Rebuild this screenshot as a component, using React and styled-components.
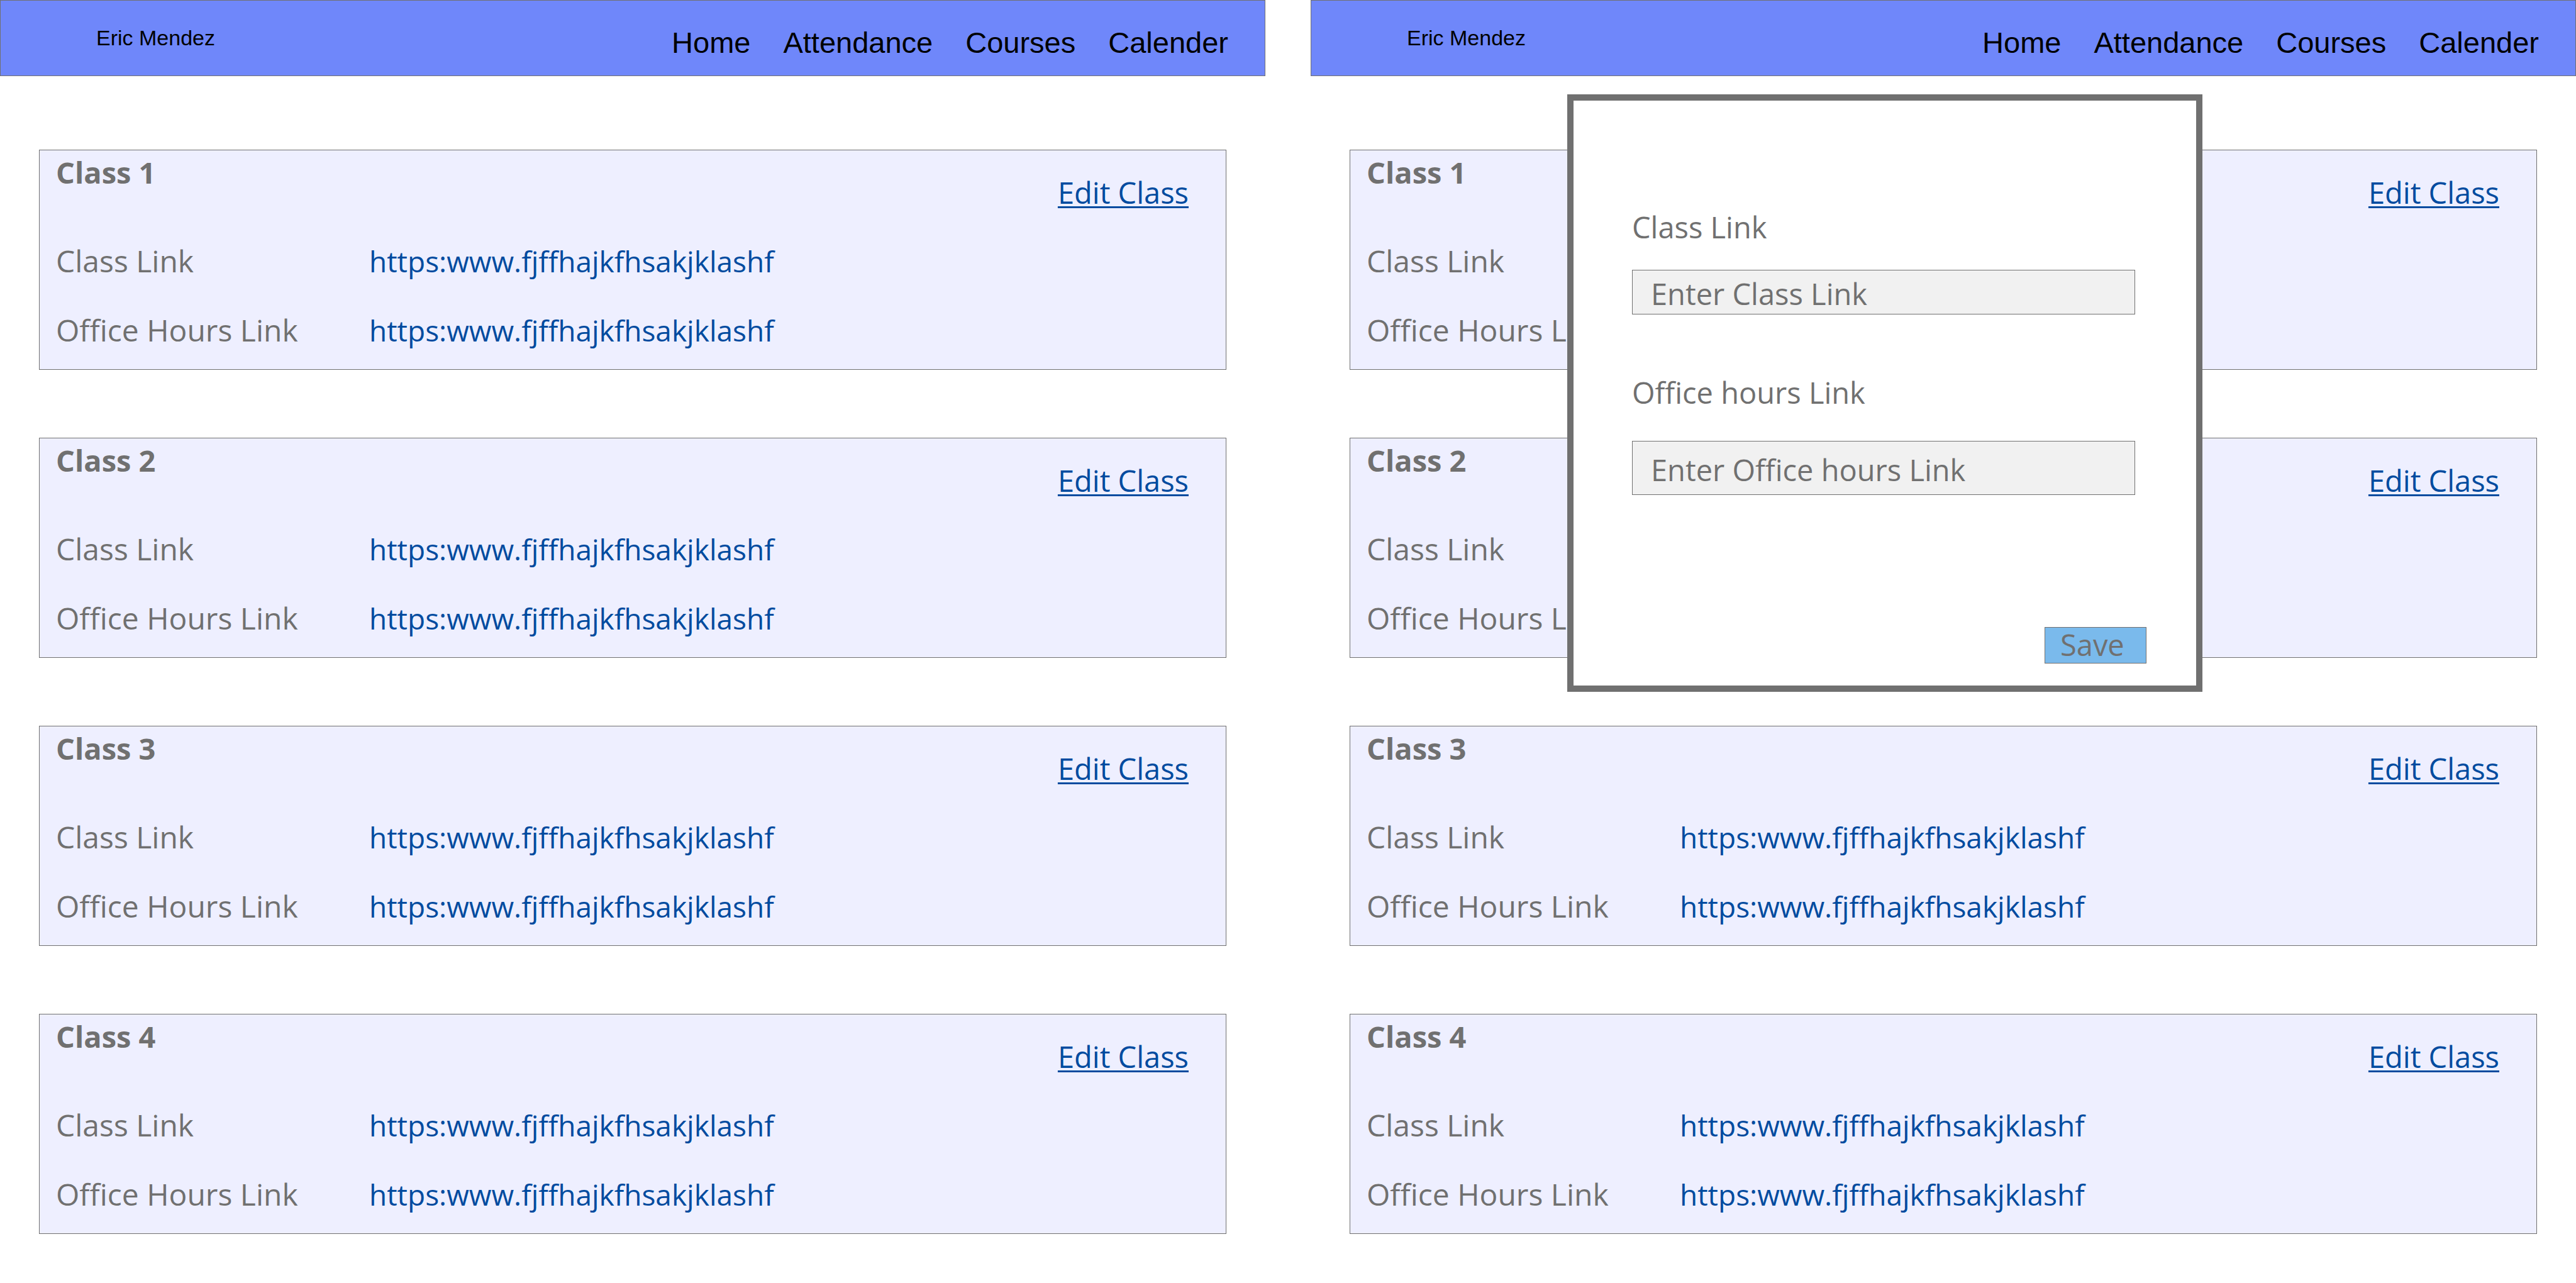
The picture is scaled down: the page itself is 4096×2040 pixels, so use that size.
import React, { useId } from "react";
import styled, { createGlobalStyle } from "styled-components";

const GlobalStyle = createGlobalStyle`
  *, *::before, *::after {
    box-sizing: border-box;
  }
  body {
    margin: 0;
    background: #ffffff;
    color: #707070;
    font-family: "Open Sans", "Noto Sans", sans-serif;
    font-size: 47px;
    font-variant-ligatures: none;
    line-height: 64px;
  }
`;

const Screens = styled.div`
  display: grid;
  grid-template-columns: 1fr 1fr;
  gap: 72px;
`;

const Screen = styled.section`
  position: relative;
  min-width: 0;
`;

const TopBar = styled.header`
  display: flex;
  justify-content: space-between;
  align-items: flex-start;
  padding: 39px 58px 24px 152px;
  border: 1px solid #707070;
  background: #6f87fa;
  color: #000000;
  font-family: "Liberation Sans", Arial, sans-serif;
`;

const UserName = styled.span`
  font-size: 34px;
  line-height: 40px;
`;

const Nav = styled.nav`
  display: flex;
  gap: 52px;
`;

const NavLink = styled.a`
  color: inherit;
  line-height: 56px;
  text-decoration: none;
`;

const ClassList = styled.main`
  display: flex;
  flex-direction: column;
  gap: 108px;
  padding: 117px 62px 78px;
`;

const Card = styled.article`
  padding: 3px 59px 30px 26px;
  border: 1px solid #707070;
  background: #eeefff;
`;

const CardHead = styled.div`
  display: flex;
  justify-content: space-between;
  margin-bottom: 45px;
`;

const CardTitle = styled.h2`
  margin: 0;
  font-size: 47px;
  font-weight: 700;
`;

const EditLink = styled.a`
  margin-top: 32px;
  color: #004b9f;
  text-decoration: underline;
  text-decoration-thickness: 3px;
  text-underline-offset: 4px;
  text-decoration-skip-ink: none;
`;

const Links = styled.dl`
  display: grid;
  grid-template-columns: 498px 1fr;
  row-gap: 46px;
  margin: 0;
`;

const LinkLabel = styled.dt`
  font-size: 48px;
`;

const LinkValue = styled.dd`
  margin: 0;
`;

const Url = styled.a`
  color: #004b9f;
  font-size: 46px;
  text-decoration: none;
`;

const Dialog = styled.form`
  position: absolute;
  top: 150px;
  left: 408px;
  display: flex;
  flex-direction: column;
  width: 1010px;
  padding: 169px 79px 35px 93px;
  border: 10px solid #707070;
  background: #ffffff;
`;

const Field = styled.div`
  display: flex;
  flex-direction: column;
  gap: ${(p) => (p.$tall ? 45 : 36)}px;
  margin: 0 18px ${(p) => (p.$tall ? 210 : 92)}px 0;
`;

const Input = styled.input`
  width: 100%;
  height: ${(p) => (p.$tall ? 86 : 71)}px;
  padding: 5px 29px 0;
  border: 1px solid #707070;
  border-radius: 0;
  background: #f1f1f1;
  color: #707070;
  font: inherit;

  &::placeholder {
    color: #707070;
    opacity: 1;
  }
`;

const SaveButton = styled.button`
  align-self: flex-end;
  width: 162px;
  height: 58px;
  padding: 0 0 3px 24px;
  border: 1px solid #707070;
  background: #7abaec;
  color: #707070;
  font: inherit;
  line-height: 52px;
  text-align: left;
`;

const pages = ["Home", "Attendance", "Courses", "Calender"];
const url = "https:www.fjffhajkfhsakjklashf";
const classes = ["Class 1", "Class 2", "Class 3", "Class 4"].map((name) => ({
  name,
  links: [
    { label: "Class Link", url },
    { label: "Office Hours Link", url },
  ],
}));

function ClassCard({ name, links }) {
  return (
    <Card>
      <CardHead>
        <CardTitle>{name}</CardTitle>
        <EditLink href="#edit">Edit Class</EditLink>
      </CardHead>
      <Links>
        {links.map((link) => (
          <React.Fragment key={link.label}>
            <LinkLabel>{link.label}</LinkLabel>
            <LinkValue>
              <Url href="#link">{link.url}</Url>
            </LinkValue>
          </React.Fragment>
        ))}
      </Links>
    </Card>
  );
}

function TextField({ label, placeholder, tall }) {
  const id = useId();
  return (
    <Field $tall={tall}>
      <label htmlFor={id}>{label}</label>
      <Input id={id} type="text" placeholder={placeholder} $tall={tall} />
    </Field>
  );
}

function EditDialog() {
  return (
    <Dialog role="dialog" aria-label="Edit Class" onSubmit={(e) => e.preventDefault()}>
      <TextField label="Class Link" placeholder="Enter Class Link" />
      <TextField label="Office hours Link" placeholder="Enter Office hours Link" tall />
      <SaveButton type="submit">Save</SaveButton>
    </Dialog>
  );
}

function ClassesScreen({ children }) {
  return (
    <Screen>
      <TopBar>
        <UserName>Eric Mendez</UserName>
        <Nav>
          {pages.map((page) => (
            <NavLink key={page} href={"#" + page.toLowerCase()}>
              {page}
            </NavLink>
          ))}
        </Nav>
      </TopBar>
      <ClassList>
        {classes.map((item) => (
          <ClassCard key={item.name} {...item} />
        ))}
      </ClassList>
      {children}
    </Screen>
  );
}

export default function App() {
  return (
    <>
      <GlobalStyle />
      <Screens>
        <ClassesScreen />
        <ClassesScreen>
          <EditDialog />
        </ClassesScreen>
      </Screens>
    </>
  );
}
